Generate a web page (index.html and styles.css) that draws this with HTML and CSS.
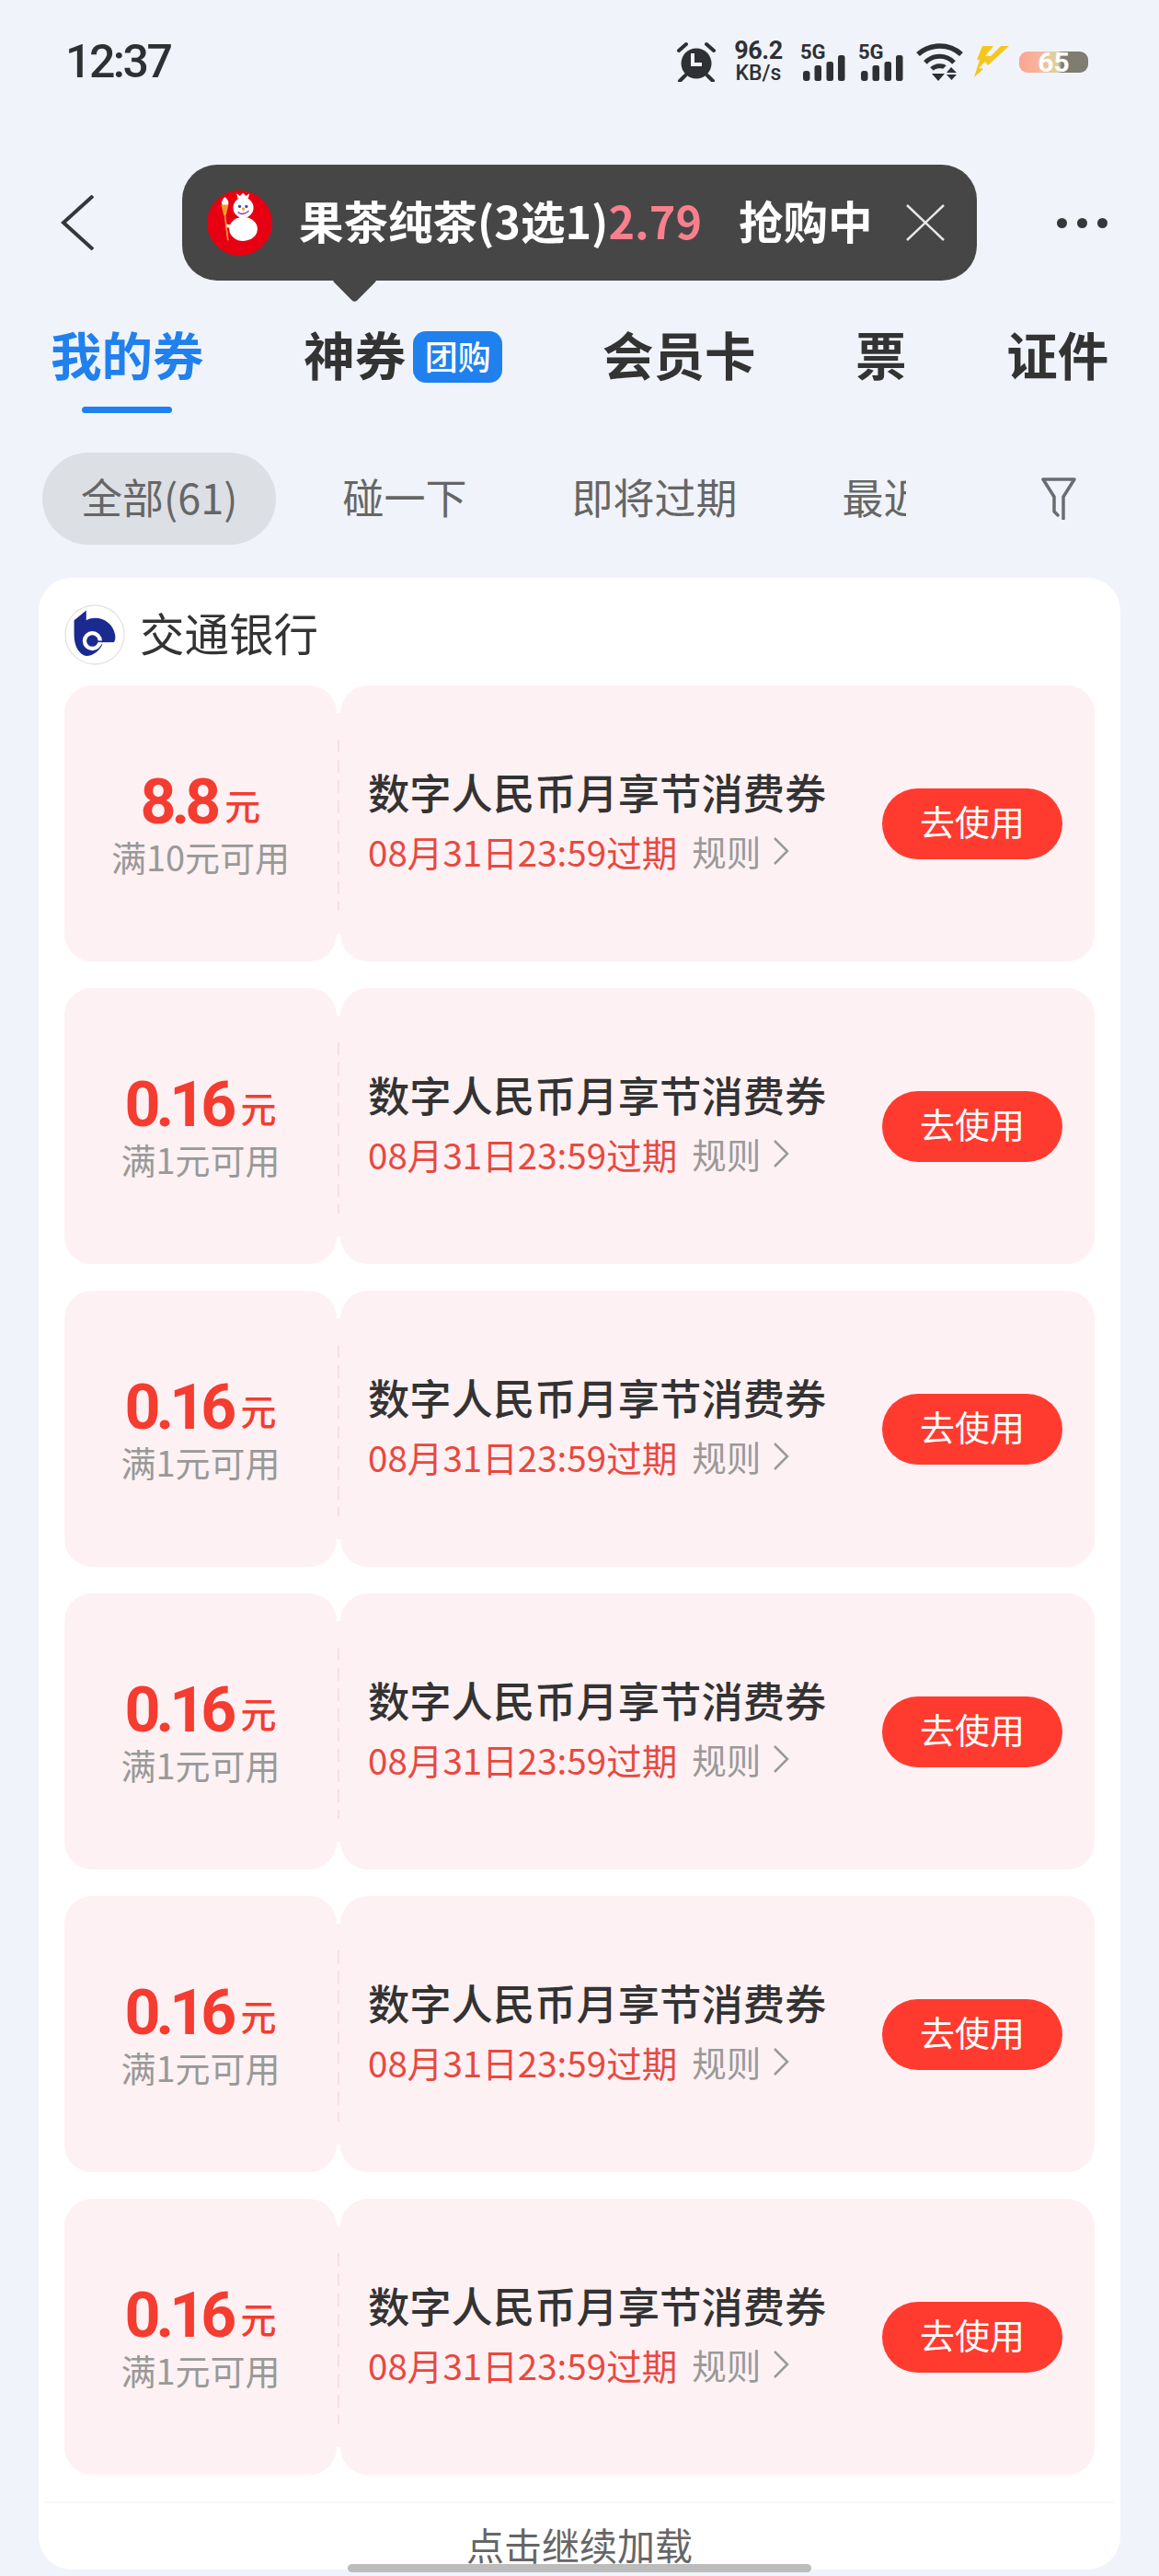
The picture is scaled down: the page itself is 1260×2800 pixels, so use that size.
FILE: index.html
```html
<!DOCTYPE html>
<html lang="zh-CN">
<head>
    <meta charset="UTF-8">
    <meta name="viewport" content="width=device-width, initial-scale=1.0">
    <link rel="stylesheet" href="styles.css">
    <title>我的券</title>
</head>
<body>
    <div class="status">
        <span class="time">12:37</span>
        <div class="status-icons">
            <svg class="alarm" width="42" height="44" viewBox="0 0 42 44">
                <circle cx="21" cy="24" r="16.5" fill="#2f3033"/>
                <path d="M15 13v12h10" transform="translate(2 0)" fill="none" stroke="#f0f3f9" stroke-width="4"/>
                <path d="M2 10l8-7M40 10l-8-7M9 37l-6 6M33 37l6 6" fill="none" stroke="#2f3033" stroke-width="4" stroke-linecap="round"/>
            </svg>
            <div class="speed"><b>96.2</b><span>KB/s</span></div>
            <div class="signal">
                <span class="signal-text">5G</span>
                <svg class="signal-bars" width="49" height="28" viewBox="0 0 49 28">
                    <rect x="3" y="17" width="7.5" height="11" rx="3" fill="#2f3033"/>
                    <rect x="15.5" y="11" width="7.5" height="17" rx="2.5" fill="#2f3033"/>
                    <rect x="28.5" y="7" width="7.5" height="21" rx="2.5" fill="#2f3033"/>
                    <rect x="41" y="0" width="7.5" height="28" rx="2.5" fill="#2f3033"/>
                </svg>
            </div>
            <div class="signal">
                <span class="signal-text">5G</span>
                <svg class="signal-bars" width="49" height="28" viewBox="0 0 49 28">
                    <rect x="3" y="17" width="7.5" height="11" rx="3" fill="#2f3033"/>
                    <rect x="15.5" y="11" width="7.5" height="17" rx="2.5" fill="#2f3033"/>
                    <rect x="28.5" y="7" width="7.5" height="21" rx="2.5" fill="#2f3033"/>
                    <rect x="41" y="0" width="7.5" height="28" rx="2.5" fill="#2f3033"/>
                </svg>
            </div>
            <svg class="wifi" width="51" height="42" viewBox="0 0 51 42">
                <path d="M2 13C15 1 36 1 49 13" fill="none" stroke="#2f3033" stroke-width="5.5"/>
                <path d="M10 22C18 13 33 13 41 22" fill="none" stroke="#2f3033" stroke-width="5"/>
                <path d="M17 29C21 25 29 25 31 27" fill="none" stroke="#2f3033" stroke-width="5"/>
                <path d="M17 34h14l-7 8zM38 27l6 6H33zM33 35h11l-5.500 6z" fill="#2f3033"/>
            </svg>
            <svg class="bolt" width="38" height="34" viewBox="0 0 38 34">
                <path d="M9 0h12L12 11h6L29 0h9L15 21l-3-4-7 7 5 1L0 34 6 15H3z" fill="#f6c61c"/>
            </svg>
            <div class="battery"><span>65</span></div>
        </div>
    </div>

    <div class="nav">
        <svg class="back" width="36" height="60" viewBox="0 0 36 60">
            <path d="M35 1L3 30l32 29" fill="none" stroke="#36373a" stroke-width="4"/>
        </svg>
        <div class="tip">
            <svg class="tip-logo" width="71" height="71" viewBox="30 40 212 212">
                <circle cx="136" cy="146" r="106" fill="#e60012"/>
                <path d="M130 66l-4-16 11 8 10-10 10 10 11-8-4 16z" fill="#fff"/>
                <circle cx="148" cy="96" r="33" fill="#fff"/>
                <ellipse cx="148" cy="165" rx="46" ry="39" fill="#fff"/>
                <path d="M118 160l-26 -6" stroke="#fff" stroke-width="10"/>
                <circle cx="136" cy="92" r="5" fill="#3a4aa8"/>
                <circle cx="158" cy="92" r="5" fill="#3a4aa8"/>
                <circle cx="148" cy="100" r="5" fill="#f0a020"/>
                <path d="M130 110q18 14 36 -4" fill="none" stroke="#7a3aa8" stroke-width="4"/>
                <path d="M88 62c-10 8-12 20-8 26h18c4-6 2-18-10-26z" fill="#fff"/>
                <path d="M76 86h24l-8 34h-8z" fill="#f59a23"/>
                <path d="M88 118l10 84" stroke="#e89a3c" stroke-width="5"/>
            </svg>
            <span class="tip-name">果茶纯茶(3选1)<em>2.79</em></span>
            <span class="tip-state">抢购中</span>
            <svg class="tip-close" width="42" height="40" viewBox="0 0 42 40">
                <path d="M1 1l40 38M41 1L1 39" fill="none" stroke="#e8e8e8" stroke-width="2.500"/>
            </svg>
        </div>
        <div class="dots"><i></i><i></i><i></i></div>
    </div>

    <div class="tabs">
        <div class="tab tab-on">我的券</div>
        <div class="tab">神券<span class="tab-badge">团购</span></div>
        <div class="tab">会员卡</div>
        <div class="tab">票</div>
        <div class="tab">证件</div>
    </div>

    <div class="filters">
        <div class="chips">
            <span class="chip chip-on">全部(61)</span>
            <span class="chip">碰一下</span>
            <span class="chip">即将过期</span>
            <span class="chip">最近</span>
        </div>
        <svg class="funnel" width="38" height="46" viewBox="0 0 38 46">
            <path d="M2 2h34L24 21v24M14 21L2 2M14 21v16l4 4" fill="none" stroke="#6b6c70" stroke-width="3.500" stroke-linecap="round" stroke-linejoin="round"/>
        </svg>
    </div>

    <div class="card">
        <div class="bank">
            <svg class="bank-logo" width="66" height="66" viewBox="0 0 200 200">
                <circle cx="100" cy="100" r="97" fill="#fff" stroke="#e6e3da" stroke-width="4"/>
                <path d="M32 52L72 20V52C110 32 160 55 167 100C169 112 167 120 163 125H128C120 150 95 170 72 170C50 165 32 140 32 100Z" fill="#1b2a8e"/>
                <circle cx="92" cy="120" r="32" fill="#fff"/>
                <path d="M120 125h44v6h-46z" fill="#fff"/>
                <circle cx="92" cy="120" r="19" fill="#1b2a8e"/>
                <path d="M100 122h52" stroke="#1b2a8e" stroke-width="5"/>
            </svg>
            <span class="bank-name">交通银行</span>
        </div>

        <div class="coupon">
            <div class="coupon-left">
                <div class="amount">8.8<small>元</small></div>
                <div class="limit">满10元可用</div>
            </div>
            <div class="coupon-main">
                <div class="coupon-info">
                    <div class="coupon-title">数字人民币月享节消费券</div>
                    <div class="coupon-sub">
                        <span class="expire">08月31日23:59过期</span>
                        <span class="rule">规则</span>
                        <svg class="rule-arrow" width="18" height="30" viewBox="0 0 18 30"><path d="M2 1l14 14L2 29" fill="none" stroke="#999" stroke-width="2.500"/></svg>
                    </div>
                </div>
                <div class="use-btn">去使用</div>
            </div>
        </div>

        <div class="coupon">
            <div class="coupon-left">
                <div class="amount">0.16<small>元</small></div>
                <div class="limit">满1元可用</div>
            </div>
            <div class="coupon-main">
                <div class="coupon-info">
                    <div class="coupon-title">数字人民币月享节消费券</div>
                    <div class="coupon-sub">
                        <span class="expire">08月31日23:59过期</span>
                        <span class="rule">规则</span>
                        <svg class="rule-arrow" width="18" height="30" viewBox="0 0 18 30"><path d="M2 1l14 14L2 29" fill="none" stroke="#999" stroke-width="2.500"/></svg>
                    </div>
                </div>
                <div class="use-btn">去使用</div>
            </div>
        </div>

        <div class="coupon">
            <div class="coupon-left">
                <div class="amount">0.16<small>元</small></div>
                <div class="limit">满1元可用</div>
            </div>
            <div class="coupon-main">
                <div class="coupon-info">
                    <div class="coupon-title">数字人民币月享节消费券</div>
                    <div class="coupon-sub">
                        <span class="expire">08月31日23:59过期</span>
                        <span class="rule">规则</span>
                        <svg class="rule-arrow" width="18" height="30" viewBox="0 0 18 30"><path d="M2 1l14 14L2 29" fill="none" stroke="#999" stroke-width="2.500"/></svg>
                    </div>
                </div>
                <div class="use-btn">去使用</div>
            </div>
        </div>

        <div class="coupon">
            <div class="coupon-left">
                <div class="amount">0.16<small>元</small></div>
                <div class="limit">满1元可用</div>
            </div>
            <div class="coupon-main">
                <div class="coupon-info">
                    <div class="coupon-title">数字人民币月享节消费券</div>
                    <div class="coupon-sub">
                        <span class="expire">08月31日23:59过期</span>
                        <span class="rule">规则</span>
                        <svg class="rule-arrow" width="18" height="30" viewBox="0 0 18 30"><path d="M2 1l14 14L2 29" fill="none" stroke="#999" stroke-width="2.500"/></svg>
                    </div>
                </div>
                <div class="use-btn">去使用</div>
            </div>
        </div>

        <div class="coupon">
            <div class="coupon-left">
                <div class="amount">0.16<small>元</small></div>
                <div class="limit">满1元可用</div>
            </div>
            <div class="coupon-main">
                <div class="coupon-info">
                    <div class="coupon-title">数字人民币月享节消费券</div>
                    <div class="coupon-sub">
                        <span class="expire">08月31日23:59过期</span>
                        <span class="rule">规则</span>
                        <svg class="rule-arrow" width="18" height="30" viewBox="0 0 18 30"><path d="M2 1l14 14L2 29" fill="none" stroke="#999" stroke-width="2.500"/></svg>
                    </div>
                </div>
                <div class="use-btn">去使用</div>
            </div>
        </div>

        <div class="coupon">
            <div class="coupon-left">
                <div class="amount">0.16<small>元</small></div>
                <div class="limit">满1元可用</div>
            </div>
            <div class="coupon-main">
                <div class="coupon-info">
                    <div class="coupon-title">数字人民币月享节消费券</div>
                    <div class="coupon-sub">
                        <span class="expire">08月31日23:59过期</span>
                        <span class="rule">规则</span>
                        <svg class="rule-arrow" width="18" height="30" viewBox="0 0 18 30"><path d="M2 1l14 14L2 29" fill="none" stroke="#999" stroke-width="2.500"/></svg>
                    </div>
                </div>
                <div class="use-btn">去使用</div>
            </div>
        </div>

        <div class="more">点击继续加载</div>
    </div>

    <div class="home-bar"></div>
</body>
</html>
```

FILE: styles.css
```css
* {
    box-sizing: border-box;
}

html, body {
    height: 2800px;
    overflow: hidden;
}

body {
    margin: 0;
    position: relative;
    background-color: #f0f3f9;
    color: #333;
    font-family: "Noto Sans CJK SC", "Noto Sans", sans-serif;
}

svg {
    display: block;
    flex: none;
}

/* status bar */
.status {
    height: 134px;
    padding: 0 77px 0 71px;
    display: flex;
    align-items: center;
    justify-content: space-between;
}

.time {
    font-family: Roboto, sans-serif;
    font-size: 50px;
    font-weight: 500;
    letter-spacing: -2.5px;
    color: #2f3033;
}

.status-icons {
    display: flex;
    align-items: center;
    gap: 14px;
}

.alarm {
    margin-right: 7px;
}

.speed {
    width: 51px;
    margin-right: 6px;
    display: flex;
    flex-direction: column;
    align-items: center;
    font-family: Roboto, sans-serif;
    color: #2f3033;
    line-height: 22px;
}

.speed b {
    font-size: 27px;
    letter-spacing: -0.5px;
}

.speed span {
    font-size: 23px;
    font-weight: 500;
    margin-top: 3px;
}

.signal {
    width: 49px;
    height: 42px;
    display: flex;
    flex-direction: column;
}

.signal-text {
    height: 22px;
    font-family: Roboto, sans-serif;
    font-size: 22px;
    font-weight: 700;
    line-height: 22px;
    color: #2f3033;
}

.signal-bars {
    margin-top: -8px;
}

.bolt {
    margin-left: -2px;
}

.battery {
    width: 75px;
    height: 23px;
    margin-left: -3px;
    border-radius: 9px;
    background: linear-gradient(90deg, #fba591 0, #f8b49c 28%, #d6d6a0 56%, #7f7c72 62%, #7f7c72 100%);
    display: flex;
    align-items: center;
    justify-content: center;
}

.battery span {
    font-family: Roboto, sans-serif;
    font-size: 30px;
    font-weight: 700;
    line-height: 23px;
    color: #fff;
}

/* nav row with bubble */
.nav {
    height: 126px;
    margin-top: 45px;
    padding-left: 66px;
    display: flex;
    align-items: center;
}

.tip {
    width: 864px;
    height: 126px;
    margin-left: 96px;
    padding: 0 35px 0 27px;
    position: relative;
    display: flex;
    align-items: center;
    border-radius: 38px;
    background-color: #464646;
    color: #fff;
    font-size: 48.500px;
    font-weight: 700;
}

.tip::after {
    content: "";
    position: absolute;
    left: 170px;
    top: 108px;
    width: 35px;
    height: 35px;
    border-radius: 4px;
    background-color: #464646;
    transform: rotate(45deg);
}

.tip-logo {
    margin-right: 29px;
}

.tip-name {
    padding-bottom: 7px;
    white-space: nowrap;
}

.tip-name em {
    font-style: normal;
    color: #f97f8c;
}

.tip-state {
    margin-left: 40px;
    padding-bottom: 7px;
    white-space: nowrap;
}

.tip-close {
    margin-left: auto;
}

.dots {
    margin-left: 87px;
    display: flex;
    gap: 11px;
}

.dots i {
    width: 11px;
    height: 11px;
    border-radius: 50%;
    background-color: #36373a;
}

/* tabs */
.tabs {
    height: 60px;
    margin-top: 53px;
    padding-left: 55px;
    display: flex;
    gap: 108.700px;
}

.tab {
    position: relative;
    display: flex;
    align-items: flex-start;
    font-size: 55.500px;
    font-weight: 700;
    line-height: 53px;
    white-space: nowrap;
}

.tab-on {
    color: #2080ee;
}

.tab-on::after {
    content: "";
    position: absolute;
    left: 34px;
    top: 84px;
    width: 98px;
    height: 7px;
    border-radius: 4px;
    background-color: #2080ee;
}

.tab-badge {
    width: 97px;
    height: 56px;
    margin-left: 8px;
    align-self: center;
    border-radius: 14px;
    background-color: #2080ee;
    color: #fff;
    font-size: 36px;
    font-weight: 500;
    line-height: 52px;
    text-align: center;
}

/* filter chips */
.filters {
    height: 100px;
    margin-top: 74px;
    padding: 0 90px 0 46px;
    display: flex;
    align-items: center;
    justify-content: space-between;
}

.chips {
    width: 939px;
    display: flex;
    gap: 30px;
    overflow: hidden;
}

.chip {
    height: 100px;
    padding: 0 42px;
    flex: none;
    border-radius: 50px;
    color: #666;
    font-size: 45px;
    line-height: 96px;
}

.chip-on {
    background-color: #dcdfe4;
}

/* card */
.card {
    margin: 36px 42px 0 42px;
    padding: 29px 28px 0;
    border-radius: 36px;
    background-color: #fff;
}

.bank {
    height: 66px;
    margin-bottom: 22px;
    display: flex;
    align-items: center;
    gap: 16px;
}

.bank-name {
    padding-bottom: 7px;
    font-size: 48.500px;
    color: #333;
}

.coupon {
    height: 300px;
    margin-bottom: 29px;
    position: relative;
    display: flex;
    gap: 4px;
    background: linear-gradient(#fef1f3, #fef1f3) 296px 30px / 4px 240px no-repeat;
}

.coupon::after {
    content: "";
    position: absolute;
    left: 297px;
    top: 59px;
    width: 2px;
    height: 186px;
    background: repeating-linear-gradient(#f6dfe3 0, #f6dfe3 14px, transparent 14px, transparent 22px);
}

.coupon-left {
    width: 296px;
    padding-top: 5px;
    display: flex;
    flex-direction: column;
    align-items: center;
    justify-content: center;
    border-radius: 30px;
    background-color: #fef1f3;
}

.amount {
    font-family: Roboto, sans-serif;
    font-size: 68px;
    font-weight: 700;
    letter-spacing: -5px;
    line-height: 60px;
    white-space: nowrap;
    color: #f43c30;
}

.amount small {
    margin-left: 9px;
    font-family: "Noto Sans CJK SC", sans-serif;
    font-size: 39px;
    font-weight: 500;
    letter-spacing: 0;
    vertical-align: 4px;
}

.limit {
    margin-top: 5px;
    font-size: 38px;
    line-height: 44px;
    color: #999;
}

.coupon-main {
    flex: 1;
    padding: 0 35px 0 30px;
    display: flex;
    align-items: center;
    justify-content: space-between;
    border-radius: 30px;
    background-color: #fef1f3;
}

.coupon-info {
    padding-bottom: 11px;
}

.coupon-title {
    font-size: 45.300px;
    font-weight: 500;
    line-height: 60px;
    white-space: nowrap;
    color: #333;
}

.coupon-sub {
    margin-top: 10px;
    height: 50px;
    display: flex;
    align-items: center;
    font-size: 38.600px;
    line-height: 50px;
    white-space: nowrap;
}

.expire {
    color: #e8493f;
}

.rule {
    margin-left: 16px;
    font-size: 37.500px;
    color: #999;
}

.rule-arrow {
    margin-left: 13px;
}

.use-btn {
    width: 196px;
    height: 77px;
    border-radius: 39px;
    background-color: #ff3b30;
    color: #fff;
    font-size: 38px;
    line-height: 70px;
    text-align: center;
}

.more {
    margin: 0 -22px;
    padding-top: 16px;
    border-top: 2px solid #f8f8f8;
    color: #666;
    font-size: 41px;
    line-height: 56px;
    text-align: center;
}

.home-bar {
    position: absolute;
    left: 378px;
    top: 2787px;
    width: 504px;
    height: 9px;
    border-radius: 5px;
    background-color: #bcbcbc;
}
```
